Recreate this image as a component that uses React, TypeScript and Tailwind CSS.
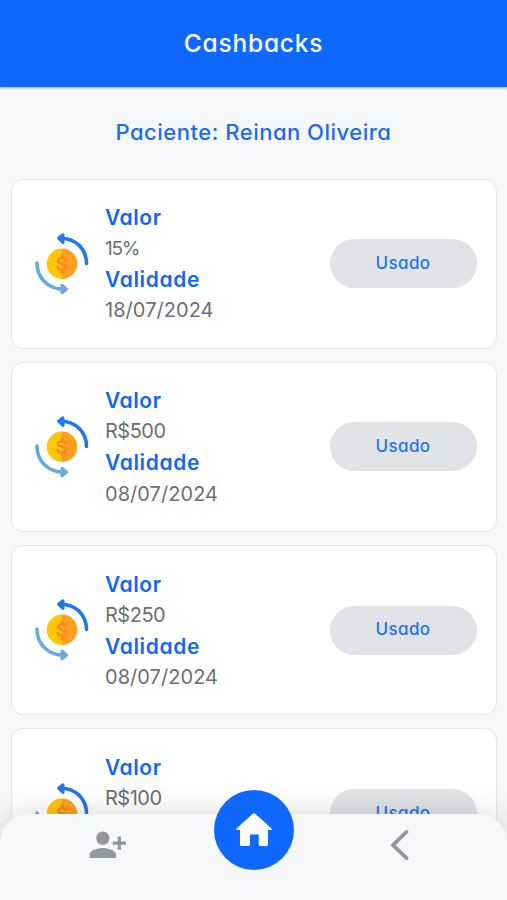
import React from "react";

type Cashback = { value: string; expires: string; percent?: boolean };

const cashbacks: Cashback[] = [
  { value: "15%", expires: "18/07/2024", percent: true },
  { value: "R$500", expires: "08/07/2024" },
  { value: "R$250", expires: "08/07/2024" },
  { value: "R$100", expires: "08/07/2024" },
];

function CoinIcon() {
  return (
    <svg viewBox="0 0 54 62" className="h-[62px] w-[54px] shrink-0" fill="none">
      <path d="M27 15.500a15.300 15.300 0 0 0 0 30.600z" fill="#ffc60a" />
      <path d="M27 15.500a15.300 15.300 0 0 1 0 30.600z" fill="#ff9f22" />
      <path d="M31 27.500c-.6-1.700-2-2.300-4-2.300-2.300 0-3.900 1-3.900 2.600 0 3.700 8.200 2.300 8.200 6 0 1.900-1.700 3-4.200 3-2.400 0-4-1-4.400-2.800M27 22.500v2.500M27 37v2.800" stroke="#f98a1c" strokeWidth="2.600" strokeLinecap="round" />
      <path d="M26 5.200C41 5.200 51.500 16.500 51.500 30.500" stroke="#1f78f0" strokeWidth="3.600" strokeLinecap="round" />
      <path d="M28 1.800L23.500 5.200l4.500 4.200z" fill="#1f78f0" stroke="#1f78f0" strokeWidth="3" strokeLinejoin="round" />
      <path d="M2 30C2 45 13 56.200 29 56.200" stroke="#67a9e0" strokeWidth="3.600" strokeLinecap="round" />
      <path d="M27 52.200l4.500 4-4.500 3.600z" fill="#67a9e0" stroke="#67a9e0" strokeWidth="3" strokeLinejoin="round" />
    </svg>
  );
}

function CashbackCard({ value, expires, percent }: Cashback) {
  return (
    <li className="flex h-[170.3px] shrink-0 items-center rounded-xl border border-[#e4e6e9] bg-white pr-[19.5px] pl-[23px]">
      <CoinIcon />
      <dl className="ml-4 flex-1 pt-px text-[20px] leading-[31.1px]">
        <dt className="text-[21px] font-semibold tracking-[0.55px] text-[#1168f5]">Valor</dt>
        <dd className={percent ? "text-[19px] tracking-[-1.3px] text-[#6b6f74]" : "tracking-[-0.5px] text-[#6b6f74]"}>{value}</dd>
        <dt className="text-[21px] font-semibold tracking-[0.65px] text-[#1168f5]">Validade</dt>
        <dd className="tracking-[0.05px] text-[#6b6f74]">{expires}</dd>
      </dl>
      <button className="h-[49px] w-[147px] rounded-full bg-[#e2e3e7] text-[17px] font-medium tracking-[0.4px] text-[#2473f5]">Usado</button>
    </li>
  );
}

export default function App() {
  return (
    <div className="relative flex h-[900px] w-[507px] flex-col overflow-hidden bg-[#f5f7f9] font-['Inter',sans-serif] [font-feature-settings:'cv11']">
      <header className="flex h-[86.5px] shrink-0 items-center justify-center bg-[#0f69ff] pt-px shadow-[0_1px_3px_rgba(0,0,0,0.3)]">
        <h1 className="text-[24.5px] font-medium tracking-[0.8px] text-white">Cashbacks</h1>
      </header>
      <h2 className="flex h-[92px] shrink-0 items-center justify-center text-[22px] font-medium tracking-[0.5px] text-[#1a6cf0]">Paciente: Reinan Oliveira</h2>
      <ul className="flex flex-col gap-[13px] pr-[10px] pl-[11px]">
        {cashbacks.map((item) => (
          <CashbackCard key={item.value} {...item} />
        ))}
      </ul>
      <nav className="absolute inset-x-0 bottom-0 h-[86px] rounded-t-[28px] bg-[#f5f7f9] shadow-[0_0_32px_rgba(0,0,0,0.16)]">
        <button className="absolute top-[11px] left-[87.5px]" aria-label="Adicionar paciente">
          <svg viewBox="0 0 24 24" className="size-[39.6px]" fill="#94989e">
            <path d="M13 8c0-2.210-1.790-4-4-4S5 5.790 5 8s1.790 4 4 4 4-1.790 4-4zm2 2v2h3v3h2v-3h3v-2h-3V7h-2v3zM1 18v2h16v-2c0-2.660-5.330-4-8-4s-8 1.340-8 4z" />
          </svg>
        </button>
        <button className="absolute -top-6 left-[214px] flex size-[79.5px] items-center justify-center rounded-full bg-[#0f69ff]" aria-label="Início">
          <svg viewBox="0 0 38 34" className="h-[34px] w-[38px]" fill="white">
            <path d="M17.500 1q1.500-1.300 3 0L36.500 15.500q1 1.500-.8 1.500H33v14.500q0 1.500-1.500 1.500h-6.300q-1.500 0-1.500-1.500V21.500H15v10q0 1.500-1.500 1.500H6.500Q5 33 5 31.500V17H2.300Q.5 17 1.500 15.500z" />
          </svg>
        </button>
        <button className="absolute top-4 left-[389px]" aria-label="Voltar">
          <svg viewBox="0 0 20 31" className="h-[31px] w-5" fill="none" stroke="#94989e" strokeWidth="3.800" strokeLinecap="round" strokeLinejoin="round">
            <path d="M17.500 1.900L4 15.200l13.500 13" />
          </svg>
        </button>
      </nav>
    </div>
  );
}
